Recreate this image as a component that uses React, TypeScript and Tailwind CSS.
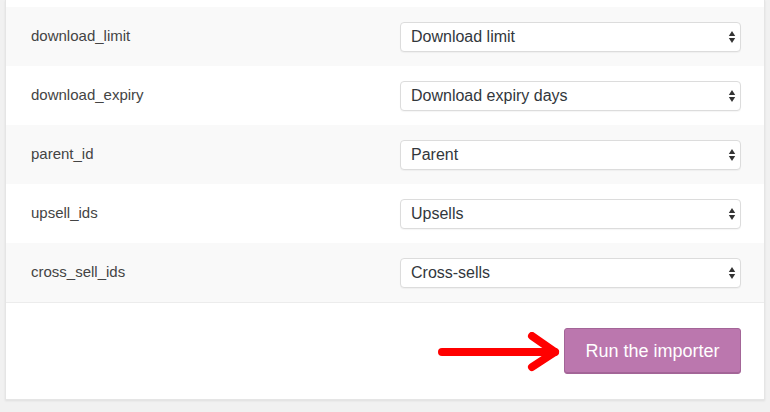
import React from "react";

const rows = [
  { field: "download_limit", label: "Download limit" },
  { field: "download_expiry", label: "Download expiry days" },
  { field: "parent_id", label: "Parent" },
  { field: "upsell_ids", label: "Upsells" },
  { field: "cross_sell_ids", label: "Cross-sells" },
];

function SelectBox({ value }: { value: string }) {
  return (
    <div className="relative w-[341px]">
      <select
        defaultValue={value}
        className="h-[30px] w-full appearance-none rounded-[4px] border border-[#dcdcdc] bg-white pl-[10px] pr-8 text-[16px] text-[#32373c] shadow-[0_1px_1px_rgba(0,0,0,0.04)] outline-none"
      >
        <option>{value}</option>
      </select>
      <svg
        className="pointer-events-none absolute right-[5px] top-[8px]"
        width="8"
        height="14"
        viewBox="0 0 8 14"
      >
        <path d="M4 1 L7.2 6 H0.8 Z" fill="#333" />
        <path d="M4 13 L7.2 8 H0.8 Z" fill="#333" />
      </svg>
    </div>
  );
}

export default function App() {
  return (
    <div
      className="h-[412px] overflow-hidden bg-[#f1f1f1] pl-[5px] pr-[5px]"
      style={{ fontFamily: '"Liberation Sans", Arial, sans-serif' }}
    >
      <div className="w-[760px] border border-t-0 border-[#e5e5e5] bg-white pt-[7px] shadow-[0_1px_2px_rgba(0,0,0,0.08)]">
        {rows.map((r, i) => (
          <div
            key={r.field}
            className={`flex h-[59px] items-center justify-between pl-[25px] pr-[23px] ${
              i % 2 === 0 ? "bg-[#f9f9f9]" : "bg-white"
            }`}
          >
            <span className="text-[15px] text-[#444]">{r.field}</span>
            <SelectBox value={r.label} />
          </div>
        ))}
        <div className="flex h-[97px] items-center justify-end gap-[2px] border-t border-[#ececec] pr-[23px]">
          <svg width="125" height="40" viewBox="0 0 125 40" className="mt-[1px]">
            <g stroke="#ff0000" strokeWidth="8" strokeLinecap="round" strokeLinejoin="round" fill="none">
              <path d="M5 20 H118" />
              <path d="M95 4 L118 20 L95 35" />
            </g>
          </svg>
          <button className="h-[46px] w-[177px] rounded-[3px] border border-[#a36597] bg-[#bb77ae] text-[18px] text-white shadow-[inset_0_-1px_0_#a36597]">
            Run the importer
          </button>
        </div>
      </div>
    </div>
  );
}
